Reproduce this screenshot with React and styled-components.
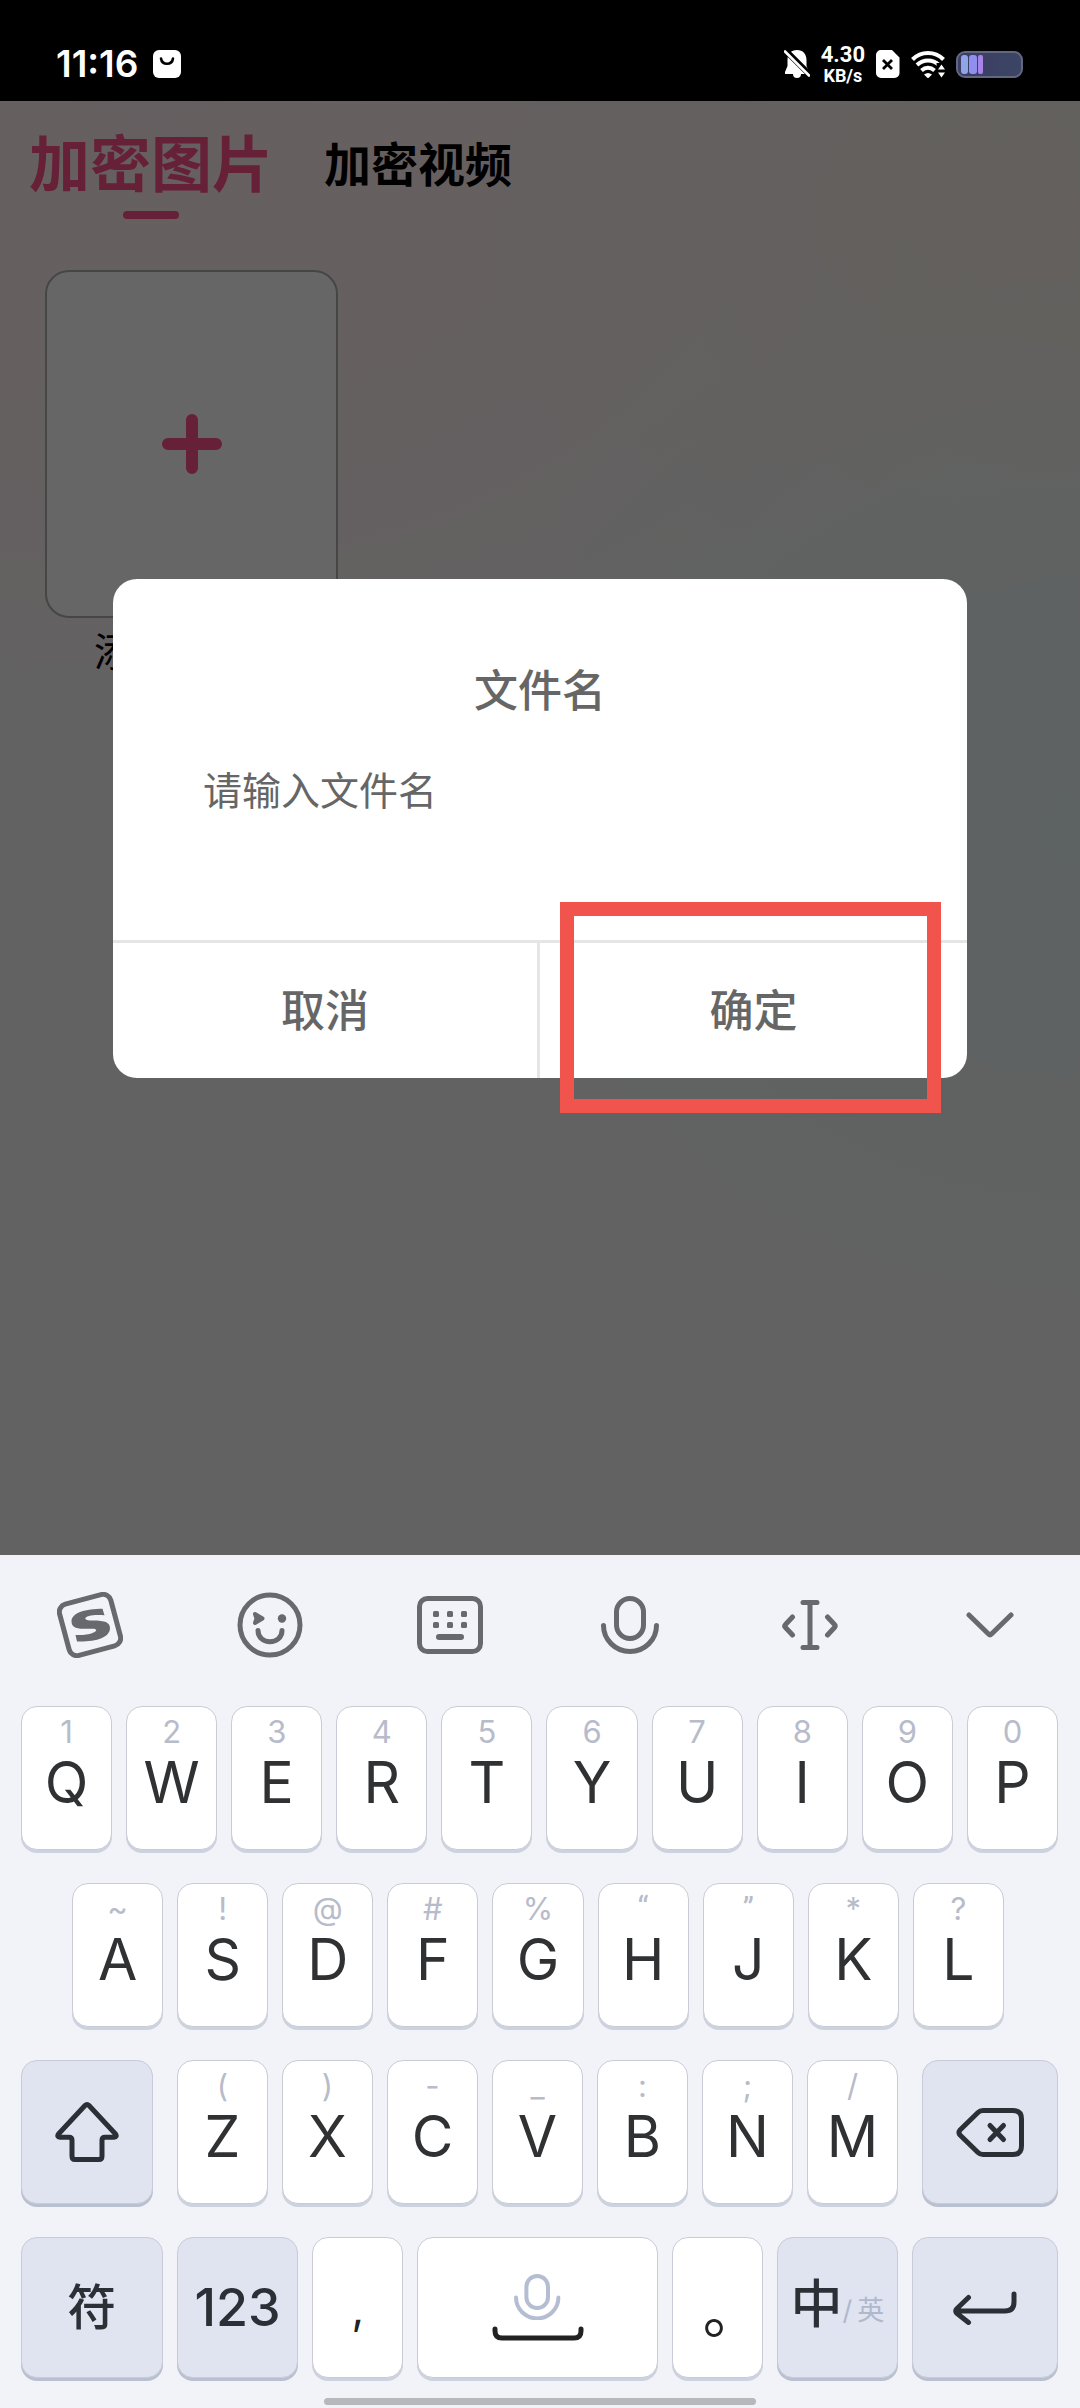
import React, { useState } from 'react'
import styled, { createGlobalStyle } from 'styled-components'

const GlobalStyle = createGlobalStyle`
  * {
    box-sizing: border-box;
  }

  body {
    margin: 0;
    font-family: Inter, 'Noto Sans CJK SC', sans-serif;
  }

  button,
  input {
    margin: 0;
    padding: 0;
    border: 0;
    background: none;
    font: inherit;
    color: inherit;
  }

  button {
    cursor: pointer;
  }

  svg {
    display: block;
  }
`

const Screen = styled.div`
  display: flex;
  flex-direction: column;
  min-height: 100vh;
`

//------------------------------------------------------------------------
// Status bar
//------------------------------------------------------------------------

const StatusBar = styled.header`
  display: flex;
  align-items: center;
  justify-content: space-between;
  padding: 27px 57px 0 56px;
  height: 101px;
  background: #000;
  color: #fff;
`

const StatusGroup = styled.div`
  display: flex;
  align-items: center;
  gap: ${props => props.gap}px;
`

const Clock = styled.time`
  font-size: 37px;
  line-height: 40px;
  font-weight: 600;
`

const NetSpeed = styled.div`
  display: flex;
  flex-direction: column;
  align-items: center;
  font-family: Roboto, sans-serif;
  font-weight: 700;
  font-size: 18px;
  line-height: 18px;
`

const NetValue = styled.span`
  font-size: 22px;
  line-height: 24px;
`

const BagIcon = () => (
  <svg width="28" height="28" viewBox="0 0 28 28" aria-hidden="true">
    <rect width="28" height="28" rx="6" fill="#fff" />
    <path d="M8 8.500C9 15.500 19 15.500 20 8.500" fill="none" stroke="#000" strokeWidth="2.600" strokeLinecap="round" />
  </svg>
)

const BellOffIcon = () => (
  <svg width="26" height="30" viewBox="0 0 26 30" aria-hidden="true">
    <path d="M13 1c6 0 9.500 4 9.500 10v6l2.500 6v2H1v-2l2.500-6v-6C3.500 5 7 1 13 1Z" fill="#fff" />
    <path d="M9 25h8a4 4 0 0 1-8 0Z" fill="#fff" />
    <path d="M0 0 26 26" stroke="#000" strokeWidth="6" />
    <path d="M1 2.500 25 26.500" stroke="#fff" strokeWidth="2.600" strokeLinecap="round" />
  </svg>
)

const SimIcon = () => (
  <svg width="24" height="28" viewBox="0 0 24 28" aria-hidden="true">
    <path d="M5 0h11l7.500 7.500V23a5 5 0 0 1-5 5H5a5 5 0 0 1-5-5V5a5 5 0 0 1 5-5Z" fill="#fff" />
    <path d="m7 10 9 9m0-9-9 9" stroke="#000" strokeWidth="2.800" />
  </svg>
)

const WifiIcon = () => (
  <svg width="34" height="28" viewBox="0 0 34 28" aria-hidden="true">
    <g fill="none" stroke="#fff" strokeWidth="4">
      <path d="M1.500 9.500C10 .8 24 .8 32.500 9.500" />
      <path d="M6 15c6.500-6 15.500-6 22 0" />
      <path d="M10.500 20.500c4-3.600 9-3.600 13 0" />
    </g>
    <path d="M13 24.500c2.800-2 5.200-2 8 0L17 28.500Z" fill="#fff" />
    <path d="M25.500 13H34v15h-7.500Z" fill="#000" />
    <path d="m27 19.500 3.500-5 3.500 5Zm0 3h7l-3.500 5Z" fill="#fff" />
  </svg>
)

const BatteryIcon = () => (
  <svg width="67" height="27" viewBox="0 0 67 27" aria-hidden="true">
    <defs>
      <linearGradient id="batteryShell" x1="0" x2="1">
        <stop offset="0" stopColor="#3d3c66" />
        <stop offset="1" stopColor="#3b4663" />
      </linearGradient>
    </defs>
    <rect x="1" y="1" width="65" height="25" rx="8" fill="url(#batteryShell)" stroke="#626882" strokeWidth="2" />
    <rect x="5" y="4" width="7" height="19" rx="3" fill="#8ea6e6" />
    <rect x="13" y="4" width="8" height="19" rx="3" fill="#8f8ff0" />
    <rect x="22" y="4" width="5" height="19" rx="2" fill="#a884e6" />
  </svg>
)

//------------------------------------------------------------------------
// Gallery page
//------------------------------------------------------------------------

const Page = styled.main`
  position: relative;
  flex: 1;
  background:
    radial-gradient(ellipse 60% 38% at 100% 50%, #e9f4f6 0%, rgba(233, 244, 246, 0) 100%),
    radial-gradient(ellipse 55% 32% at 100% 8%, #f8f1e8 0%, rgba(248, 241, 232, 0) 100%),
    radial-gradient(ellipse 85% 46% at 14% 0%, #ffeef2 0%, #fceff1 50%, rgba(252, 239, 241, 0) 100%),
    #f6f6f6;
`

const Tabs = styled.nav`
  display: flex;
  align-items: flex-start;
  gap: 51px;
  padding: 18px 29px 0;
`

const Tab = styled.button`
  display: flex;
  flex-direction: column;
  align-items: center;
  font-size: ${props => (props.$active ? '61px' : '47px')};
  line-height: 92px;
  font-weight: 700;
  color: ${props => (props.$active ? '#ff508c' : '#000')};
  white-space: nowrap;

  &::after {
    content: '';
    width: 56px;
    height: 8px;
    border-radius: 4px;
    background: ${props => (props.$active ? '#ff508c' : 'transparent')};
  }
`

const Albums = styled.section`
  display: flex;
  flex-wrap: wrap;
  gap: 30px;
  padding: 51px 45px;
`

const Album = styled.button`
  display: flex;
  flex-direction: column;
  align-items: center;
  gap: 6px;
  width: 293px;
  font-size: 39px;
  line-height: 56px;
`

const AlbumCover = styled.span`
  display: flex;
  align-items: center;
  justify-content: center;
  width: 100%;
  height: 348px;
  border: 2px solid #b0aeae;
  border-radius: 24px;
  background: #fff;
`

//------------------------------------------------------------------------
// Dialog
//------------------------------------------------------------------------

const Backdrop = styled.div`
  position: absolute;
  inset: 0;
  display: flex;
  align-items: center;
  justify-content: center;
  padding: 0 113px;
  background: rgba(0, 0, 0, 0.6);
`

const Dialog = styled.form`
  width: 100%;
  border-radius: 24px;
  background: #fff;
  color: #666;
`

const DialogBody = styled.div`
  display: flex;
  flex-direction: column;
  gap: 40px;
  padding: 82px 90px 119px;
`

const DialogTitle = styled.label`
  font-size: 44px;
  line-height: 60px;
  font-weight: 500;
  text-align: center;
`

const NameInput = styled.input`
  width: 100%;
  height: 60px;
  font-size: 39px;
  outline: none;

  &::placeholder {
    color: #666;
    opacity: 1;
  }
`

const DialogActions = styled.div`
  display: grid;
  grid-template-columns: 1fr 1fr;
  border-top: 3px solid #e5e5e5;
`

const DialogButton = styled.button`
  position: relative;
  height: 135px;
  padding-bottom: 4px;
  font-size: 44px;
  font-weight: 500;

  &:first-child {
    border-right: 3px solid #e5e5e5;
  }
`

const Highlight = styled.span`
  position: absolute;
  inset: -41px 26px -35px 20px;
  border: 14px solid #f0544c;
  pointer-events: none;
`

//------------------------------------------------------------------------
// Keyboard
//------------------------------------------------------------------------

const Keyboard = styled.section`
  display: flex;
  flex-direction: column;
  padding-bottom: 3px;
  background: #f1f3f8;
`

const Toolbar = styled.div`
  display: grid;
  grid-template-columns: repeat(6, 1fr);
  height: 140px;
  color: #67696d;
`

const Tool = styled.button`
  display: flex;
  align-items: center;
  justify-content: center;
`

const Rows = styled.div`
  display: flex;
  flex-direction: column;
  gap: 33px;
  padding: 11px 22px 20px 21px;
`

const Row = styled.div`
  display: grid;
  grid-template-columns: ${props => props.$columns};
  gap: ${props => props.$gap || 14}px;
  padding: ${props => props.$inset || '0'};
`

const Key = styled.button`
  display: flex;
  flex-direction: column;
  align-items: center;
  gap: 5px;
  height: 144px;
  padding-top: 9px;
  border: 1px solid #c9ccd6;
  border-radius: 16px;
  background: #fff;
  box-shadow: 0 3px 0 #ccd3df;
  color: #303133;
  font-size: 57px;
  line-height: 60px;
`

const KeyHint = styled.span`
  font-family: ${props => (props.$quote ? 'Roboto' : 'Inter')}, sans-serif;
  font-size: 31px;
  line-height: 32px;
  color: #b7bbca;
`

const ActionKey = styled(Key)`
  flex-direction: ${props => (props.$stacked ? 'column' : 'row')};
  justify-content: center;
  gap: 6px;
  height: ${props => (props.$tall ? '144px' : '141px')};
  padding: 0;
  background: ${props => (props.$light ? '#fff' : '#dfe4f0')};
  box-shadow: 0 3px 0 ${props => (props.$light ? '#ccd3df' : '#b9c0d0')};
  color: ${props => (props.$light ? '#222' : '#2b3036')};
  font-size: ${props => props.$size || 52}px;
  font-weight: ${props => (props.$light ? 400 : 500)};
`

const FullStop = styled.span`
  font-family: 'Noto Sans CJK SC', sans-serif;
  font-feature-settings: 'halt';
`

const Language = styled.span`
  display: flex;
  align-items: center;
  padding-bottom: 6px;
`

const OtherLanguage = styled.span`
  display: flex;
  gap: 5px;
  padding-top: 12px;
  font-size: 27px;
  font-weight: 400;
  color: #b0b8ce;
`

const HomeBar = styled.div`
  align-self: center;
  width: 40%;
  height: 7px;
  border-radius: 4px;
  background: #b6b8b9;
`

const Stroke = ({ width, height, size = 5, children }) => (
  <svg
    width={width}
    height={height}
    viewBox={`0 0 ${width} ${height}`}
    fill="none"
    stroke="currentColor"
    strokeWidth={size}
    strokeLinecap="round"
    strokeLinejoin="round"
    aria-hidden="true"
  >
    {children}
  </svg>
)

const SogouIcon = () => (
  <Stroke width={66} height={66}>
    <rect x="6.500" y="6.500" width="53" height="53" rx="8" transform="rotate(-15 33 33)" />
    <path
      d="M45.500 16.800C29 17 14.500 20.500 14.500 29.500c0 8.500 11 7.300 21 7.300 5 0 5 2.500 0 4.200-4 1.500-9 2.200-17 2l1.500 6.500C39 50 53 45.500 53 36c0-7.500-10-7.500-20-7.500-6-.2-6-3.200-1-4.400 4-1.200 9-1.200 15.500-.8Z"
      fill="currentColor"
      stroke="none"
    />
  </Stroke>
)

const SmileIcon = () => (
  <Stroke width={66} height={66}>
    <circle cx="33" cy="33" r="30" />
    <path d="m18 22 7.500 4.500-7.500 4.500 1.500-4.500Z" fill="currentColor" strokeWidth="4" />
    <circle cx="45" cy="26.500" r="4.200" fill="currentColor" stroke="none" />
    <path d="M21 38.500c0 15 24 15 24 0" />
  </Stroke>
)

const BoardIcon = () => (
  <Stroke width={66} height={58}>
    <rect x="2.500" y="2.500" width="61" height="53" rx="8" />
    {[18, 29].map(y => [19, 33, 47].map(x => (
      <rect key={`${x}-${y}`} x={x - 3} y={y - 3} width="6" height="6" rx="1.500" fill="currentColor" stroke="none" />
    )))}
    <path d="M22 41h22" strokeWidth="6" />
  </Stroke>
)

const MicIcon = ({ scale = 1 }) => (
  <svg width={58 * scale} height={58 * scale} viewBox="0 0 58 58" fill="none" stroke="currentColor" strokeWidth="5" strokeLinecap="round" aria-hidden="true">
    <rect x="15.500" y="2.500" width="27" height="40" rx="13.500" />
    <path d="M2.500 29.500a26.500 26 0 0 0 53 0" />
  </svg>
)

const CursorIcon = () => (
  <Stroke width={58} height={50}>
    <path d="M22 2.500h14M22 47.500h14M29 2.500v45M11.500 17l-7 7.500q-1.500 1.500 0 3l7 7.500M46.500 17l7 7.500q1.500 1.500 0 3l-7 7.500" />
  </Stroke>
)

const ChevronIcon = () => (
  <Stroke width={48} height={26}>
    <path d="M3 3 22.500 22q1.500 1.500 3 0L45 3" />
  </Stroke>
)

const ShiftIcon = () => (
  <Stroke width={64} height={60}>
    <path d="M30 3.500q2-2 4 0L60.500 32q2 3-1.500 3.300H50q-3 0-3 3V54q0 3.500-3 3.500H20q-3 0-3-3.500V38.300q0-3-3-3H5Q1.500 35 3.500 32Z" />
  </Stroke>
)

const BackspaceIcon = () => (
  <Stroke width={68} height={49}>
    <path d="M27 2.500h30q8.500 0 8.500 8.500v27q0 8.500-8.500 8.500H27q-3 0-5-2L4 27q-2-2.500 0-5L22 4.500q2-2 5-2Z" />
    <path d="m34 17.500 13.500 14m0-14L34 31.500" />
  </Stroke>
)

const EnterIcon = () => (
  <Stroke width={64} height={34}>
    <path d="M61 3v8q0 9-9 9H3M15.500 6.500 3.500 18q-1.500 2 0 4l12 9.500" />
  </Stroke>
)

const SpaceIcon = () => (
  <Stroke width={92} height={15}>
    <path d="M3 3v2q0 7 7 7h72q7 0 7-7V3" />
  </Stroke>
)

const SpaceMic = styled.span`
  color: #b5bdd2;
`

const tools = [
  { label: '搜狗输入法', Icon: SogouIcon },
  { label: '表情', Icon: SmileIcon },
  { label: '键盘切换', Icon: BoardIcon },
  { label: '语音输入', Icon: MicIcon },
  { label: '光标移动', Icon: CursorIcon },
  { label: '收起键盘', Icon: ChevronIcon },
]

const topRow = [['Q', '1'], ['W', '2'], ['E', '3'], ['R', '4'], ['T', '5'], ['Y', '6'], ['U', '7'], ['I', '8'], ['O', '9'], ['P', '0']]
const middleRow = [['A', '~'], ['S', '!'], ['D', '@'], ['F', '#'], ['G', '%'], ['H', '“'], ['J', '”'], ['K', '*'], ['L', '?']]
const bottomRow = [['Z', '('], ['X', ')'], ['C', '-'], ['V', '_'], ['B', ':'], ['N', ';'], ['M', '/']]

const LetterKeys = ({ keys, onType }) =>
  keys.map(([letter, hint]) => (
    <Key key={letter} type="button" onClick={() => onType(letter)}>
      <KeyHint $quote={hint === '“' || hint === '”'}>{hint}</KeyHint>
      <span>{letter}</span>
    </Key>
  ))

const App = () => {
  const [name, setName] = useState('')
  const type = char => setName(current => current + char)

  return (
    <Screen>
      <GlobalStyle />
      <StatusBar>
        <StatusGroup gap={15}>
          <Clock>11:16</Clock>
          <BagIcon />
        </StatusGroup>
        <StatusGroup gap={11}>
          <BellOffIcon />
          <NetSpeed>
            <NetValue>4.30</NetValue>
            <span>KB/s</span>
          </NetSpeed>
          <SimIcon />
          <WifiIcon />
          <BatteryIcon />
        </StatusGroup>
      </StatusBar>

      <Page>
        <Tabs>
          <Tab type="button" $active>加密图片</Tab>
          <Tab type="button">加密视频</Tab>
        </Tabs>
        <Albums>
          <Album type="button">
            <AlbumCover>
              <svg width="60" height="60" viewBox="0 0 60 60" stroke="#ff508c" strokeWidth="12" strokeLinecap="round" aria-hidden="true">
                <path d="M30 6v48M6 30h48" />
              </svg>
            </AlbumCover>
            添加文件夹
          </Album>
        </Albums>

        <Backdrop>
          <Dialog onSubmit={e => e.preventDefault()}>
            <DialogBody>
              <DialogTitle htmlFor="file-name">文件名</DialogTitle>
              <NameInput
                id="file-name"
                placeholder="请输入文件名"
                value={name}
                onChange={e => setName(e.target.value)}
              />
            </DialogBody>
            <DialogActions>
              <DialogButton type="button">取消</DialogButton>
              <DialogButton type="submit">
                确定
                <Highlight />
              </DialogButton>
            </DialogActions>
          </Dialog>
        </Backdrop>
      </Page>

      <Keyboard>
        <Toolbar>
          {tools.map(({ label, Icon }) => (
            <Tool key={label} type="button" aria-label={label}>
              <Icon />
            </Tool>
          ))}
        </Toolbar>
        <Rows>
          <Row $columns="repeat(10, 1fr)">
            <LetterKeys keys={topRow} onType={type} />
          </Row>
          <Row $columns="repeat(9, 1fr)" $inset="0 54px 0 51px">
            <LetterKeys keys={middleRow} onType={type} />
          </Row>
          <Row $columns="132fr 721fr 136fr" $gap={24}>
            <ActionKey type="button" $tall aria-label="大写">
              <ShiftIcon />
            </ActionKey>
            <Row $columns="repeat(7, 1fr)">
              <LetterKeys keys={bottomRow} onType={type} />
            </Row>
            <ActionKey type="button" $tall aria-label="删除" onClick={() => setName(name.slice(0, -1))}>
              <BackspaceIcon />
            </ActionKey>
          </Row>
          <Row $columns="142fr 122fr 91fr 241fr 91fr 122fr 146fr">
            <ActionKey type="button" $size={49}>符</ActionKey>
            <ActionKey type="button">123</ActionKey>
            <ActionKey type="button" $light $size={44} onClick={() => type(',')}>,</ActionKey>
            <ActionKey type="button" $light $stacked aria-label="空格" onClick={() => type(' ')}>
              <SpaceMic>
                <MicIcon scale={0.8} />
              </SpaceMic>
              <SpaceIcon />
            </ActionKey>
            <ActionKey type="button" $light $size={58} onClick={() => type('。')}>
              <FullStop>。</FullStop>
            </ActionKey>
            <ActionKey type="button">
              <Language>
                中
                <OtherLanguage>
                  <span>/</span>
                  <span>英</span>
                </OtherLanguage>
              </Language>
            </ActionKey>
            <ActionKey type="button" aria-label="换行">
              <EnterIcon />
            </ActionKey>
          </Row>
        </Rows>
        <HomeBar />
      </Keyboard>
    </Screen>
  )
}

export default App
